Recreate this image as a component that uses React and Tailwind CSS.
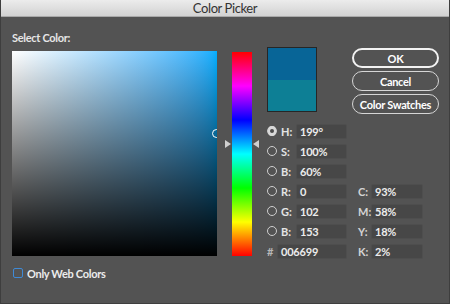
import React from "react";

const font = { fontFamily: "Lato, 'Open Sans', sans-serif" };

function Radio({ checked }) {
  return (
    <div className="w-[10px] h-[10px] rounded-full border border-[#cfcfcf] flex items-center justify-center shrink-0 bg-transparent">
      {checked && <div className="w-[10px] h-[10px] rounded-full bg-[#d8d8d8] flex items-center justify-center"><div className="w-[4px] h-[4px] rounded-full bg-[#4a4a4a]" /></div>}
    </div>
  );
}

function Field({ value, w = "w-[51px]" }) {
  return (
    <div className={`${w} h-[15px] bg-[#474747] border border-[#4e4e4e] rounded-[2px] flex items-center pl-[3px] text-[11px] font-bold text-[#ececec] leading-none tracking-[-0.2px]`}>
      {value}
    </div>
  );
}

function Row({ radio, checked, label, value, cLabel, cValue }) {
  return (
    <div className="h-[20px] flex items-center">
      {radio ? (
        <>
          <Radio checked={checked} />
          <div className="ml-[4px] w-[15px] text-[11px] font-bold text-[#e4e4e4] leading-none">{label}</div>
          <Field value={value} />
        </>
      ) : (
        <>
          <div className="w-[10px] text-[11px] font-bold text-[#b8b8b8] leading-none">#</div>
          <Field value={value} w="w-[70px]" />
        </>
      )}
      {cLabel && (
        <>
          <div className="ml-[11px] w-[13px] text-[11px] font-bold text-[#d4d4d4] leading-none">{cLabel}</div>
          <Field value={cValue} w="w-[52px]" />
        </>
      )}
    </div>
  );
}

function Btn({ children, primary }) {
  return (
    <div
      className={`h-[20px] w-[87px] rounded-full flex items-center justify-center text-[11px] font-bold text-white leading-none tracking-[-0.3px] ${
        primary ? "border-2 border-[#f2f2f2]" : "border-[1.5px] border-[#d6d6d6]"
      }`}
    >
      {children}
    </div>
  );
}

export default function App() {
  return (
    <div className="w-[450px] h-[304px] bg-[#535353] flex flex-col border-x border-b border-[#3e3e3e] overflow-hidden" style={font}>
      <div className="h-[17px] shrink-0 bg-linear-to-b from-[#ececec] to-[#d2d2d2] border-b border-[#a9a9a9] flex items-center justify-center text-[13px] text-[#333333] leading-none tracking-[-0.4px]">
        Color Picker
      </div>
      <div className="flex-1 flex flex-row items-start pl-[11px]">
        <div className="w-[205px] flex flex-col">
          <div className="mt-[14px] h-[13px] leading-[13px] text-[11px] font-bold text-[#e6e6e6] tracking-[-0.3px]">Select Color:</div>
          <div className="mt-[7px] w-[205px] h-[205px] relative overflow-hidden bg-linear-to-r from-white to-[#00aeff]">
            <div className="absolute inset-0 bg-linear-to-t from-black to-transparent" />
            <div className="absolute left-[200px] top-[78px] w-[9px] h-[9px] rounded-full border-[1.5px] border-white" />
          </div>
          <div className="mt-[11px] h-[12px] flex items-center">
            <div className="ml-[1px] w-[10px] h-[10px] rounded-[2px] border-[1.5px] border-[#3f8ad6]" />
            <div className="ml-[4px] text-[11px] font-bold text-[#ececec] leading-none tracking-[-0.3px]">Only Web Colors</div>
          </div>
        </div>
        <div className="ml-[15px] mt-[35px] w-[20px] h-[204px] relative bg-[linear-gradient(to_bottom,#f00,#f0f,#00f,#0ff,#0f0,#ff0,#f00)]">
          <div className="absolute left-[-7px] top-[88px] w-0 h-0 border-y-[4px] border-y-transparent border-l-[6px] border-l-[#cfcfcf]" />
          <div className="absolute right-[-7px] top-[88px] w-0 h-0 border-y-[4px] border-y-transparent border-r-[6px] border-r-[#cfcfcf]" />
        </div>
        <div className="ml-[15px] mt-[30px] w-[172px] flex flex-col">
          <div className="flex flex-row items-start">
            <div className="w-[50px] h-[65px] border border-[#262626] flex flex-col">
              <div className="flex-1 bg-[#086597]" />
              <div className="flex-1 bg-[#0d7f95]" />
            </div>
            <div className="ml-[35px] mt-[1px] flex flex-col gap-[3px]">
              <Btn primary>OK</Btn>
              <Btn>Cancel</Btn>
              <Btn>Color Swatches</Btn>
            </div>
          </div>
          <div className="mt-[7px] flex flex-col">
            <Row radio checked label="H:" value="199°" />
            <Row radio label="S:" value="100%" />
            <Row radio label="B:" value="60%" />
            <Row radio label="R:" value="0" cLabel="C:" cValue="93%" />
            <Row radio label="G:" value="102" cLabel="M:" cValue="58%" />
            <Row radio label="B:" value="153" cLabel="Y:" cValue="18%" />
            <Row label="#" value="006699" cLabel="K:" cValue="2%" />
          </div>
        </div>
      </div>
    </div>
  );
}
